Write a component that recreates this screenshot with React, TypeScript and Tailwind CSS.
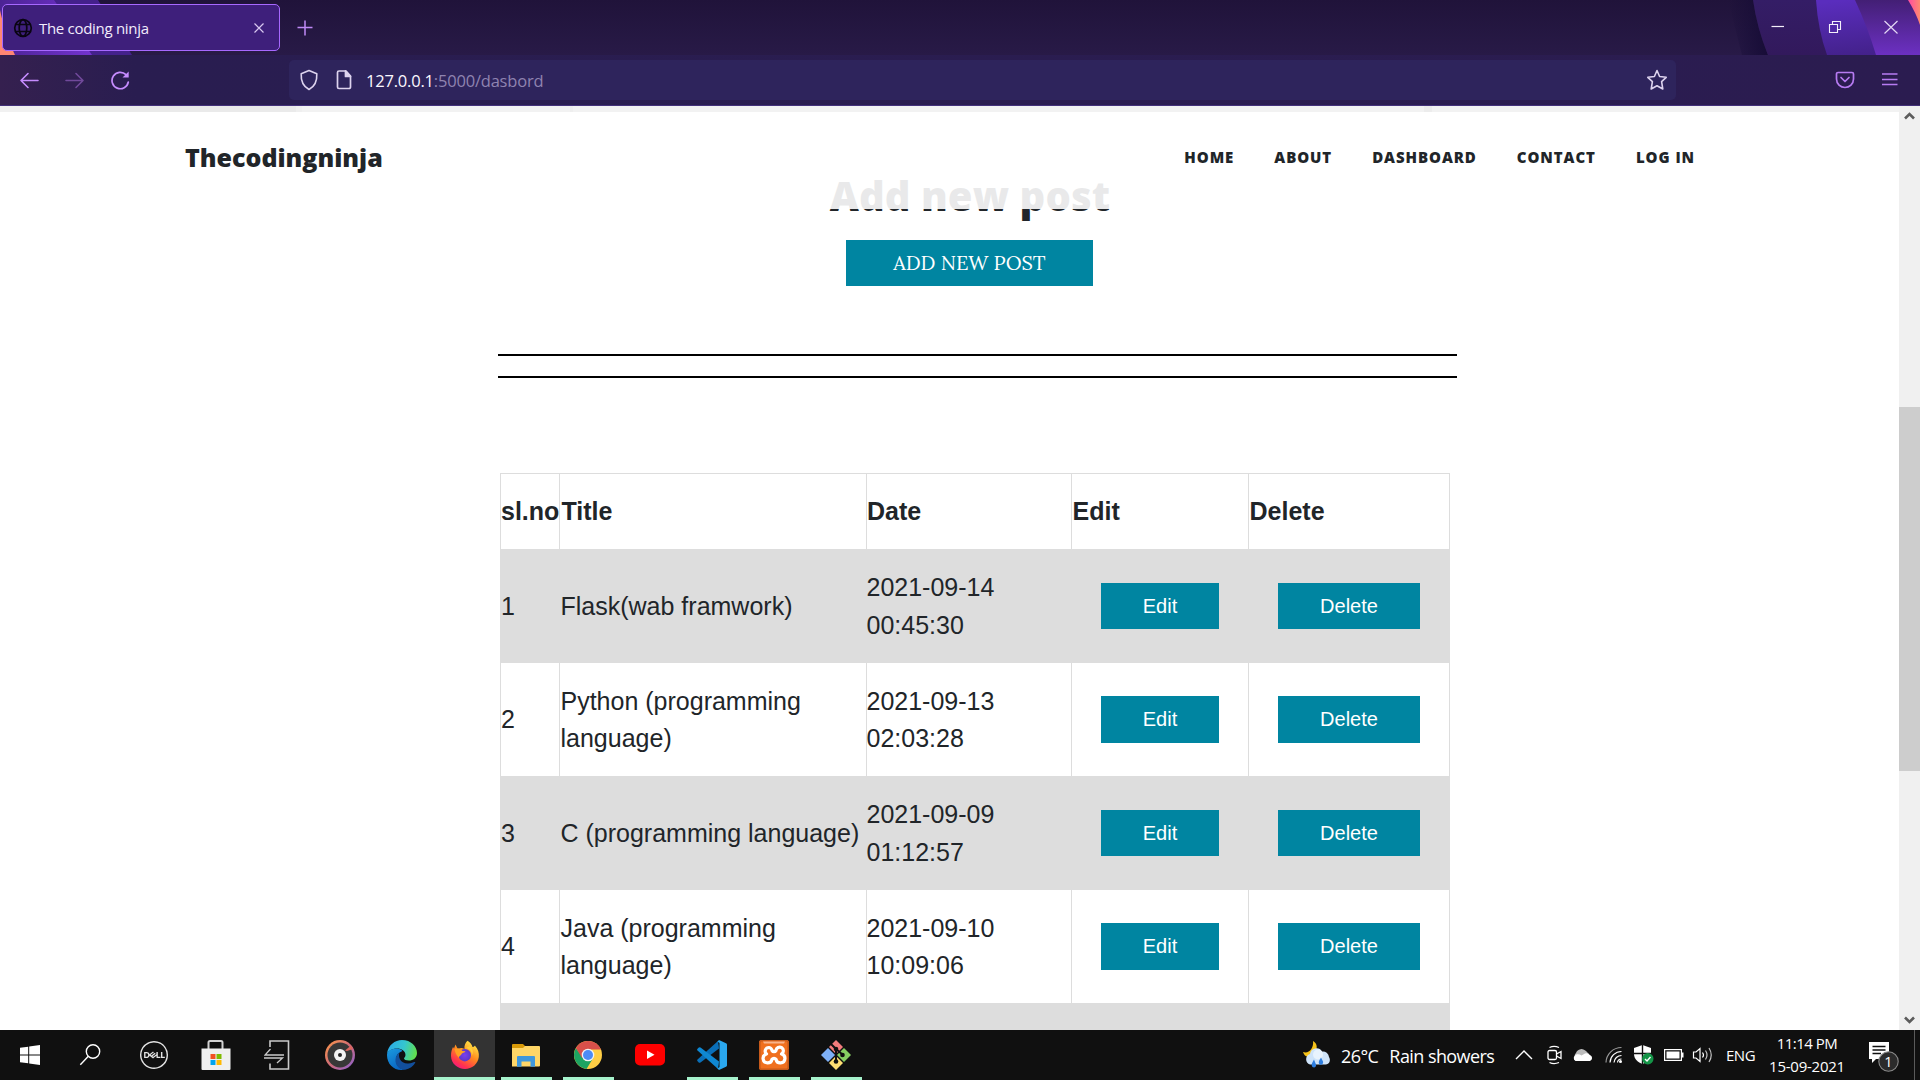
import React from "react";
import { SiDell } from "react-icons/si";

const ui = "font-['Open_Sans','Noto_Sans',sans-serif]";

function TabStrip() {
  return (
    <div className="relative h-[55px] w-full overflow-hidden bg-linear-to-b from-[#20133a] to-[#281a47]">
      <svg className="absolute inset-0" width="1920" height="55" viewBox="0 0 1920 55">
        <defs>
          <linearGradient id="shade" x1="0" x2="1" y1="0" y2="0">
            <stop offset="0" stopColor="#150b35" stopOpacity="0" />
            <stop offset="1" stopColor="#150b35" stopOpacity="0.9" />
          </linearGradient>
          <linearGradient id="g1" x1="0" x2="0" y1="0" y2="1">
            <stop offset="0" stopColor="#341d66" />
            <stop offset="1" stopColor="#32195c" />
          </linearGradient>
          <linearGradient id="g2" x1="0.3" x2="0.5" y1="0" y2="1">
            <stop offset="0" stopColor="#5a2dbd" />
            <stop offset="1" stopColor="#43218a" />
          </linearGradient>
          <linearGradient id="g3" x1="0" x2="0" y1="0" y2="1">
            <stop offset="0" stopColor="#431f75" />
            <stop offset="1" stopColor="#6c30c2" />
          </linearGradient>
          <linearGradient id="g4" x1="0" x2="1" y1="0" y2="0">
            <stop offset="0" stopColor="#ff4aa2" />
            <stop offset="1" stopColor="#ff8a70" />
          </linearGradient>
          <linearGradient id="g5" x1="0" x2="1" y1="0" y2="0">
            <stop offset="0" stopColor="#4b2394" />
            <stop offset="1" stopColor="#7333d0" />
          </linearGradient>
        </defs>
        <path d="M0 0H98L132 55H0Z" fill="#44218c" />
        <path d="M0 0H54L92 55H0Z" fill="url(#g5)" />
        <path d="M0 10Q5 35 15 55H0Z" fill="#ff8673" />
        <path d="M1728 0H1753Q1757 28 1768 55H1742Z" fill="url(#shade)" />
        <path d="M1753 0Q1757 28 1768 55H1920V0Z" fill="url(#g1)" />
        <path d="M1816 0Q1818 30 1827 55H1920V0Z" fill="url(#g2)" />
        <path d="M1855 0Q1868 28 1876 55H1920V0Z" fill="url(#g3)" />
        <path d="M1908 0Q1916 13 1920 25V0Z" fill="url(#g4)" />
      </svg>
      <div className="relative flex h-full items-start pt-1 pl-[2px]">
        <div className="flex h-[47px] w-[278px] items-center rounded-[5px] border border-[#a768ff] bg-[#3e1f7b] pr-[14px] pl-[10px]">
          <svg width="20" height="20" viewBox="0 0 20 20" fill="none" stroke="#0a0513" strokeWidth="1.7">
            <circle cx="10" cy="10" r="8.3" />
            <ellipse cx="10" cy="10" rx="3.8" ry="8.3" />
            <path d="M2.6 6.5H17.4M2.6 13.5H17.4" />
          </svg>
          <span className="ml-[6px] grow pt-[2px] text-[15px] tracking-[-0.3px] text-[#f2ecfc]">The coding ninja</span>
          <svg width="12" height="12" viewBox="0 0 12 12" stroke="#d8c8f0" strokeWidth="1.2">
            <path d="M1.5 1.5 10.5 10.5M10.5 1.5 1.5 10.5" />
          </svg>
        </div>
        <svg className="mt-[15px] ml-[16px]" width="18" height="18" viewBox="0 0 18 18" stroke="#c08af7" strokeWidth="1.5">
          <path d="M9 1.5V16.5M1.5 8.5H16.5" />
        </svg>
        <div className="mt-[14px] mr-[21px] ml-auto flex items-center gap-[41px]">
          <svg width="16" height="18" viewBox="0 0 16 18">
            <path d="M2.500 8.500H15" stroke="#f3effa" strokeWidth="1.2" />
          </svg>
          <svg width="16" height="18" viewBox="0 0 16 18" fill="none" stroke="#f3effa" strokeWidth="1.1">
            <path d="M3.500 6.500H11.500V14.500H3.500ZM6.500 6V3.500H14.500V11.500H12" />
          </svg>
          <svg width="16" height="18" viewBox="0 0 16 18" stroke="#e4d8f5" strokeWidth="1.2">
            <path d="M1.500 3 14.500 15.500M14.500 3 1.500 15.500" />
          </svg>
        </div>
      </div>
    </div>
  );
}

function Toolbar() {
  return (
    <div className="flex h-[51px] w-full items-start border-b border-[#43307a] bg-linear-to-r from-[#35204f] via-[#291d50] via-7% to-[#2b1c50] pt-[5px]">
      <div className="flex h-10 w-[289px] items-center pl-[19px]">
        <svg width="20" height="20" viewBox="0 0 20 20" fill="none" stroke="#c68cff" strokeWidth="1.6" strokeLinecap="round" strokeLinejoin="round">
          <path d="M19 10.500H2M9 3.500 2 10.500 9 17.500" />
        </svg>
        <svg className="ml-[26px]" width="20" height="20" viewBox="0 0 20 20" fill="none" stroke="#71499b" strokeWidth="1.6" strokeLinecap="round" strokeLinejoin="round">
          <path d="M1 10.500H18M11 3.500 18 10.500 11 17.500" />
        </svg>
        <svg className="ml-[25px]" width="20" height="20" viewBox="0 0 20 20" fill="none" stroke="#c68cff" strokeWidth="1.7" strokeLinecap="round">
          <path d="M18.300 12A8.200 8.200 0 1 1 16 4.700" />
          <path d="M18.700 1.500V7.500H12.500Z" fill="#c68cff" stroke="none" />
        </svg>
      </div>
      <div className="flex h-10 w-[1387px] items-center rounded-[5px] bg-[#2e245c] pr-[8px] pl-[10px]">
        <svg width="20" height="22" viewBox="0 0 20 22" fill="none" stroke="#ddd3ee" strokeWidth="1.6" strokeLinejoin="round">
          <path d="M10 1.500 17.800 4.700C18.200 12 15.500 17.500 10 20.500 4.500 17.500 1.800 12 2.200 4.700Z" />
        </svg>
        <svg className="ml-[16px]" width="18" height="22" viewBox="0 0 18 22" fill="none" stroke="#ddd3ee" strokeWidth="1.700" strokeLinejoin="round">
          <path d="M4 2H11L15.500 7V18A1.500 1.500 0 0 1 14 19.500H4A1.500 1.500 0 0 1 2.500 18V3.500A1.500 1.500 0 0 1 4 2Z" />
          <path d="M10.500 2V7.500H15.500Z" fill="#ddd3ee" />
        </svg>
        <span className="ml-[13px] grow pt-[3px] text-[16.500px] tracking-[-0.2px] text-[#8f83b0]">
          <span className="text-[#fbf8ff]">127.0.0.1</span>:5000/dasbord
        </span>
        <svg width="22" height="22" viewBox="0 0 22 22" fill="none" stroke="#ddd3ee" strokeWidth="1.600" strokeLinejoin="round">
          <path d="M11 1.500 13.600 7.500 20.200 8.300 15.600 12.700 16.800 20 11 16.800 5.200 20 6.400 12.700 1.800 8.300 8.400 7.500Z" />
        </svg>
      </div>
      <div className="flex h-10 grow items-center justify-end pr-[21px]">
        <svg width="20" height="18" viewBox="0 0 20 18" fill="none" stroke="#b77bf2" strokeWidth="1.700" strokeLinecap="round" strokeLinejoin="round">
          <path d="M3 1.500H17A1.500 1.500 0 0 1 18.500 3V8C18.500 13 14.500 16.500 10 16.500S1.500 13 1.500 8V3A1.500 1.500 0 0 1 3 1.500Z" />
          <path d="M6 6.500 10 10.500 14 6.500" />
        </svg>
        <svg className="ml-[26px]" width="18" height="16" viewBox="0 0 18 16" stroke="#b77bf2" strokeWidth="1.400">
          <path d="M1 2H16.500M1 7.500H16.500M1 12.500H16.500" />
        </svg>
      </div>
    </div>
  );
}

const rows = [
  { no: "1", title: "Flask(wab framwork)", date: "2021-09-14 00:45:30", box: "h-[114px] bg-[#dddddd]", btn: "h-[46px] pt-[2px]" },
  { no: "2", title: "Python (programming language)", date: "2021-09-13 02:03:28", box: "h-[113px]", btn: "h-[47px]" },
  { no: "3", title: "C (programming language)", date: "2021-09-09 01:12:57", box: "h-[114px] bg-[#dddddd]", btn: "h-[46px] pt-px" },
  { no: "4", title: "Java (programming language)", date: "2021-09-10 10:09:06", box: "h-[113px]", btn: "h-[47px]" },
];

const grid = "grid grid-cols-[59px_307px_205px_177px_202px] border-r border-[#dddddd]";
const cell = "flex items-center border-l border-[#dddddd]";
const bodyCell = `${cell} pt-px`;
const btn = "flex items-center justify-center bg-[#0085a1] text-[20px] text-white";

function PostTable() {
  return (
    <div className="mt-[95px] ml-[2px] w-[950px] border-t border-[#dddddd] font-['Liberation_Sans',Arial,sans-serif] text-[25px] leading-[37.5px] text-[#212529]">
      <div className={`${grid} h-[75px] font-bold`}>
        <div className={cell}>sl.no</div>
        <div className={`${cell} pl-[1.5px]`}>Title</div>
        <div className={cell}>Date</div>
        <div className={`${cell} pl-[0.5px]`}>Edit</div>
        <div className={`${cell} pl-[0.5px]`}>Delete</div>
      </div>
      {rows.map((r) => (
        <div key={r.no} className={`${grid} ${r.box}`}>
          <div className={bodyCell}>{r.no}</div>
          <div className={`${bodyCell} pl-[0.5px]`}>{r.title}</div>
          <div className={bodyCell}>
            <span className="-ml-[0.5px] w-[150px]">{r.date}</span>
          </div>
          <div className={cell}>
            <button className={`${btn} ${r.btn} ml-[29px] w-[118px]`}>Edit</button>
          </div>
          <div className={cell}>
            <button className={`${btn} ${r.btn} ml-[29px] w-[142px]`}>Delete</button>
          </div>
        </div>
      ))}
      <div className="h-[27px] bg-[#dddddd]" />
    </div>
  );
}

function Page() {
  return (
    <main className="relative h-full w-[1899px] overflow-hidden bg-white">
      <div className="flex h-[6px] w-full bg-[#7f7f7f]">
        <div className="w-[60px] bg-[#6f6f6f]" />
        <div className="w-[236px] bg-[#303030]" />
        <div className="w-[6px] bg-[#606060]" />
        <div className="ml-[268px] w-[3px] bg-[#505050]" />
        <div className="ml-[851px] w-[8px] bg-[#404040]" />
      </div>
      <div className="absolute inset-x-0 top-0 z-10 flex h-[103px] items-center bg-white/90 pr-[204px] pl-[185px] font-['Open_Sans',sans-serif] font-extrabold text-[#212529]">
        <div className="text-[25px]">Thecodingninja</div>
        <nav className="ml-auto flex gap-[40px] text-[15px] tracking-[0.94px]">
          <a>HOME</a>
          <a>ABOUT</a>
          <a>DASHBOARD</a>
          <a>CONTACT</a>
          <a>LOG IN</a>
        </nav>
      </div>
      <div className="mt-[59px] ml-[498px] w-[959px]">
        <div className="flex w-[943px] flex-col items-center">
          <h2 className="h-[50px] pl-px font-['Open_Sans',sans-serif] text-[40px] leading-[50px] font-extrabold tracking-[0.08px] whitespace-nowrap text-[#212529]">Add new post</h2>
          <button className="mt-[19px] h-[46px] w-[247px] bg-[#0085a1] font-['Lora','Liberation_Serif',serif] text-[20px] text-white">ADD NEW POST</button>
        </div>
        <div className="mt-[68px] h-[2px] bg-black" />
        <div className="mt-[20px] h-[2px] bg-black" />
        <PostTable />
      </div>
    </main>
  );
}

function Scrollbar() {
  return (
    <div className="flex h-full w-[21px] flex-col items-center bg-[#f0f0f0]">
      <svg width="21" height="20" viewBox="0 0 21 20" fill="none" stroke="#5c5c5c" strokeWidth="2.600">
        <path d="M6 12.500 10.500 8 15 12.500" />
      </svg>
      <div className="mt-[281px] h-[364px] w-full bg-[#cdcdcd]" />
      <svg className="mt-auto" width="21" height="20" viewBox="0 0 21 20" fill="none" stroke="#5c5c5c" strokeWidth="2.600">
        <path d="M6 7.500 10.500 12 15 7.500" />
      </svg>
    </div>
  );
}

function Slot({ children, open, active }: { children: React.ReactNode; open?: boolean; active?: boolean }) {
  return (
    <div className={`flex h-full w-[62px] flex-col items-center ${active ? "bg-[#333333] bg-clip-content pl-px" : ""}`}>
      <div className="flex h-[47px] items-center justify-center pt-[3px]">{children}</div>
      {(open || active) && <div className={`h-[3px] bg-[#a6f2cc] ${active ? "w-[61px]" : "w-[51px]"}`} />}
    </div>
  );
}

function TaskIcons() {
  return (
    <div className="flex h-full">
      <div className="flex w-[60px] items-center justify-center">
        <svg width="20" height="20" viewBox="0 0 20 20" fill="#fff">
          <path d="M0 2.800 8.200 1.700V9.500H0ZM9.200 1.500 20 0V9.500H9.200ZM0 10.500H8.200V18.300L0 17.200ZM9.200 10.500H20V20L9.200 18.500Z" />
        </svg>
      </div>
      <div className="flex w-[63px] items-center justify-center pr-[3px]">
        <svg width="22" height="22" viewBox="0 0 22 22" fill="none" stroke="#fff" strokeWidth="1.400">
          <circle cx="14" cy="7.500" r="6.700" />
          <path d="M9.300 12.300 1.300 20.700" />
        </svg>
      </div>
      <Slot>
        <SiDell size={28} color="#e3e3e3" />
      </Slot>
      <Slot>
        <svg width="30" height="30" viewBox="0 0 30 30">
          <path d="M7.500 10V2.500A1.500 1.500 0 0 1 9 1H20A1.500 1.500 0 0 1 21.500 2.500V10" fill="none" stroke="#d2d2d2" strokeWidth="2" />
          <path d="M.5 8.500H29.500V29A1 1 0 0 1 28.500 30H1.500A1 1 0 0 1 .5 29Z" fill="#efefef" />
          <path d="M9.500 14H14.500V19H9.500Z" fill="#f25022" />
          <path d="M15.500 14H20.500V19H15.500Z" fill="#7fba00" />
          <path d="M9.500 20H14.500V25H9.500Z" fill="#00a4ef" />
          <path d="M15.500 20H20.500V25H15.500Z" fill="#ffb900" />
        </svg>
      </Slot>
      <Slot>
        <svg className="mr-[3px]" width="26" height="30" viewBox="0 0 26 30" fill="none" stroke="#c9c9c9" strokeWidth="1.300">
          <path d="M6 7V1H24.500V29H6V23.500" strokeWidth="1.600" />
          <path d="M6.500 9 1 15H20M0 18H18.500L13 23" />
        </svg>
      </Slot>
      <Slot>
        <svg width="30" height="30" viewBox="0 0 30 30">
          <defs>
            <linearGradient id="groove" x1="0" x2="1" y1="0" y2="1">
              <stop offset="0" stopColor="#ff9a45" />
              <stop offset="0.500" stopColor="#cf6b78" />
              <stop offset="1" stopColor="#8560d8" />
            </linearGradient>
          </defs>
          <circle cx="15" cy="15" r="15" fill="url(#groove)" />
          <circle cx="15" cy="15" r="12.500" fill="#383838" />
          <path d="M20 10.500 26 5.500 28 9 22 11Z" fill="#d9665f" />
          <circle cx="15" cy="15" r="6" fill="#f4f4f4" />
          <circle cx="15" cy="15" r="2" fill="#262626" />
        </svg>
      </Slot>
      <Slot>
        <svg width="30" height="30" viewBox="0 0 30 30">
          <defs>
            <linearGradient id="edgeTop" x1="0" x2="1" y1="0.300" y2="0.500">
              <stop offset="0" stopColor="#2aa9e8" />
              <stop offset="0.550" stopColor="#35c6cf" />
              <stop offset="1" stopColor="#62e04c" />
            </linearGradient>
            <linearGradient id="edgeLow" x1="0" x2="0.500" y1="0" y2="1">
              <stop offset="0" stopColor="#1a9be0" />
              <stop offset="1" stopColor="#0a66c2" />
            </linearGradient>
          </defs>
          <path d="M0 14C1 5 8 0 15 0 24 0 30 6.500 30 13 30 18 26 20.500 22 20.500 19 20.500 17 19.500 17 18.500 17 17.500 18.500 17 18.500 15 18.500 11 14.500 8.500 10 8.500 5 8.500 1 11 0 14Z" fill="url(#edgeTop)" />
          <path d="M0 15C0 11 4.500 8.500 10 8.500 12 8.500 14.500 9.500 15.500 11 11 12.500 9 16 9 19.500 9 25 13 29.500 17.500 29.700 8 31.500 0 25 0 15Z" fill="url(#edgeLow)" />
          <path d="M12.500 12.500C11 16 12.500 23.500 21 23.500 24.500 23.500 26.500 22.300 27.500 22 28.300 21.800 28.500 22.500 28 23 25 28 20 30 16 29.700 11 28.500 8 24 8.500 19.500 8.700 16.500 10.200 14 12.500 12.500Z" fill="#124f9c" />
        </svg>
      </Slot>
      <Slot active>
        <svg width="30" height="30" viewBox="0 0 30 30">
          <defs>
            <linearGradient id="fox" x1="0.800" x2="0.200" y1="0" y2="1">
              <stop offset="0" stopColor="#fff14a" />
              <stop offset="0.450" stopColor="#ff8a1e" />
              <stop offset="0.800" stopColor="#ff3150" />
              <stop offset="1" stopColor="#f0148c" />
            </linearGradient>
            <radialGradient id="foxCore">
              <stop offset="0" stopColor="#7a3ff0" />
              <stop offset="1" stopColor="#5c36c8" />
            </radialGradient>
          </defs>
          <path d="M17.500 .8C20 2 22 5 22.500 7 24.500 7.300 24 5.500 25 5.800 28 9 29.300 13 28.800 17 28 24 22 29 15 29 7.500 29 1.200 23.500 1 16 .9 12 2 9 3 7L4 8.500 5.500 4.500 7.500 8.500 10 8.300C13 7.500 13.800 9 14.500 9 14 5.500 15.500 2.500 17.500 .8Z" fill="url(#fox)" />
          <circle cx="14.800" cy="15.200" r="6.200" fill="url(#foxCore)" />
          <path d="M4.500 9C8 7.800 11 9 12.500 11L15.500 11.300C15 13 12 13 11.500 14 11 16 9 15.500 9 18 6 15 5 12 4.500 9Z" fill="#ffa022" />
          <path d="M16 8C20.500 9 22.500 12.500 21.500 16 24 13 23 8 19.500 6Z" fill="#ffce3a" />
        </svg>
      </Slot>
      <Slot open>
        <svg width="28" height="30" viewBox="0 0 28 30">
          <path d="M0 5A1 1 0 0 1 1 4H11L13.500 6.500V9H0Z" fill="#d99a08" />
          <path d="M0 8H11L13 6H27A1 1 0 0 1 28 7V25.500A1 1 0 0 1 27 26.500H0Z" fill="#ffd667" />
          <path d="M5 26.700V17A1 1 0 0 1 6 16H22A1 1 0 0 1 23 17V26.700H18.500V21.500H9.500V26.700Z" fill="#3f97dc" />
        </svg>
      </Slot>
      <Slot open>
        <svg width="28" height="30" viewBox="0 0 28 30">
          <circle cx="14" cy="15" r="14" fill="#ffce45" />
          <path d="M1.900 8A14 14 0 0 0 12.500 28.900L19.200 18 8 16Z" fill="#1da462" />
          <path d="M1.900 8A14 14 0 0 1 27 9.500H14L8 18Z" fill="#d9504a" />
          <circle cx="14" cy="15" r="6.300" fill="#f3f3f3" />
          <circle cx="14" cy="15" r="5" fill="#4c8bf5" />
        </svg>
      </Slot>
      <Slot>
        <svg width="30" height="22" viewBox="0 0 30 22">
          <rect width="30" height="21.500" rx="5" fill="#fe0000" />
          <path d="M12 6.500 19.500 10.700 12 15Z" fill="#fff" />
        </svg>
      </Slot>
      <Slot open>
        <svg width="30" height="30" viewBox="0 0 30 30">
          <path d="M.5 19.500 21 1 22 8.500 3.500 22.500A1.500 1.500 0 0 1 1.500 22.300L.4 21A1.200 1.200 0 0 1 .5 19.500Z" fill="#0a6fb8" />
          <path d="M.5 10.500 21 29 22 21.500 3.500 7.500A1.500 1.500 0 0 0 1.500 7.700L.4 9A1.200 1.200 0 0 0 .5 10.500Z" fill="#0f88d3" />
          <path d="M22 0 29 3.200A1.800 1.800 0 0 1 30 5V25A1.800 1.800 0 0 1 29 26.800L22 30 20.500 28.500 22.500 27V3L20.500 1.500Z" fill="#2aa7ee" />
        </svg>
      </Slot>
      <Slot open>
        <svg width="30" height="30" viewBox="0 0 30 30">
          <rect width="30" height="30" rx="2.500" fill="#f0701f" />
          <rect x=".8" y=".8" width="28.400" height="28.400" rx="2" fill="none" stroke="#c65a1b" strokeWidth="1.600" />
          <path d="M4 1.500H26L25 3.500H5Z" fill="#f9b48a" />
          <path d="M10 7.500A3.700 3.700 0 0 0 7.500 14 4.500 4.500 0 1 0 13 19.300C14 18 16 18 17 19.300A4.500 4.500 0 1 0 22.500 14 3.700 3.700 0 1 0 17 10.500C16 12 14 12 13 10.500A3.700 3.700 0 0 0 10 7.500Z" fill="none" stroke="#fff" strokeWidth="3.200" strokeLinejoin="round" />
        </svg>
      </Slot>
      <Slot open>
        <svg width="30" height="30" viewBox="0 0 30 30">
          <path d="M15 0 22 7 15 14 8 7Z" fill="#f47c7c" />
          <path d="M7 8 14 15 7 22 0 15Z" fill="#7eb0f7" />
          <path d="M23 8 30 15 23 22 16 15Z" fill="#86cf62" />
          <path d="M15 16 22 23 15 30 8 23Z" fill="#ffdf73" />
          <path d="M10 4 15 9V22M15 9 22 15" fill="none" stroke="#111" strokeWidth="2" />
          <circle cx="15" cy="9" r="2.300" fill="#111" />
          <circle cx="21.500" cy="15" r="2.300" fill="#111" />
          <circle cx="15" cy="21.500" r="2.300" fill="#111" />
        </svg>
      </Slot>
    </div>
  );
}

function Tray() {
  return (
    <div className="ml-auto flex h-full items-center text-white">
      <svg width="30" height="30" viewBox="0 0 30 30" className="mr-[9px]">
        <path d="M11 1C15 3 16 8 13 12L8 17C4 17 2 15 1 12 7 14 12 8 11 1Z" fill="#f5c21a" />
        <path d="M8 24.500A5.500 5.500 0 0 1 8 14A6.500 6.500 0 0 1 20 11.500 6 6 0 0 1 27 17C29 20 27.500 24.500 23.500 24.500Z" fill="#cfe4fa" />
        <circle cx="16" cy="14.500" r="5" fill="#e8f3fe" />
        <path d="M12 19.500C9.500 24 9 25 10.500 27 13 28.500 14.500 26 14 24.500ZM19 17.500C16.500 21.500 16 23 18 24.500 20.500 25.500 21.500 23 21 21.500Z" fill="#2f7fe0" />
      </svg>
      <div className="flex w-[174px] gap-[11px] pt-[2px] text-[18px] tracking-[-0.57px] whitespace-nowrap">
        <span>26°C</span>
        <span>Rain showers</span>
      </div>
      <svg width="18" height="12" viewBox="0 0 18 12" fill="none" stroke="#fff" strokeWidth="1.400">
        <path d="M1 10 9 2 17 10" />
      </svg>
      <svg className="ml-[14px]" width="16" height="20" viewBox="0 0 16 20" fill="none" stroke="#fff" strokeWidth="1.300">
        <rect x="1" y="5.500" width="8.500" height="9" rx="1.500" />
        <path d="M9.500 9 14 6.500V13.500L9.500 11M2.500 2.500Q7 .3 12 2.500M2.500 17.500Q7 19.700 12 17.500" />
      </svg>
      <svg className="ml-[9px]" width="22" height="14" viewBox="0 0 22 14">
        <path d="M4 11A4 4 0 0 1 4 5 6 6 0 0 1 14 3L17 6 8 12Z" fill="#bcbcbc" />
        <path d="M3.500 13A3.500 3.500 0 0 1 4 6.700C6 6 8 6.500 9.500 7.500L13 5.500A5 5 0 0 1 18 7 3.200 3.200 0 0 1 18 13Z" fill="#fff" />
      </svg>
      <svg className="ml-[11px]" width="18" height="18" viewBox="0 0 18 18" fill="none" stroke="#fff" strokeWidth="1.200">
        <path d="M1 16.500A15.500 15.500 0 0 1 16.500 1.500" stroke="#999" />
        <path d="M5 16.500A11.500 11.500 0 0 1 16.500 5.500M9 16.500A7.500 7.500 0 0 1 16.500 9.500M12.500 16.500A4 4 0 0 1 16.500 13" />
        <circle cx="15.500" cy="15.500" r="1.500" fill="#fff" stroke="none" />
      </svg>
      <svg className="ml-[10px]" width="21" height="20" viewBox="0 0 21 20">
        <path d="M9.500 0 18 3V9C18 14 14 17.500 9.500 19 5 17.500 1 14 1 9V3Z" fill="#fff" />
        <path d="M9.500 0V19M1 8.500H18" stroke="#101010" strokeWidth="1.400" />
        <circle cx="14.800" cy="13.800" r="5.700" fill="#149447" />
        <path d="M12 14 14 16 17.500 12" fill="none" stroke="#fff" strokeWidth="1.400" />
      </svg>
      <svg className="ml-[10px]" width="20" height="12" viewBox="0 0 20 12">
        <rect x=".6" y=".6" width="16.800" height="10.800" fill="none" stroke="#fff" strokeWidth="1.200" />
        <path d="M2.500 2.500H15.500V9.500H2.500ZM18 3.500H19.500V8.500H18Z" fill="#fff" />
      </svg>
      <svg className="ml-[8px]" width="22" height="18" viewBox="0 0 22 18" fill="none" stroke="#fff" strokeWidth="1.200">
        <path d="M1.500 6H4L8 2.500V15.500L4 12H1.500ZM10.500 6.500Q12.500 9 10.500 11.500" />
        <path d="M13.500 4.500Q16.500 9 13.500 13.500M17 2Q21.500 9 17 16" stroke="#c4c4c4" />
      </svg>
      <span className="ml-[12px] w-[42px] text-[15px] tracking-[-0.5px]">ENG</span>
      <div className="flex w-[78px] flex-col items-center text-[15px] leading-[23px] whitespace-nowrap">
        <span className="tracking-[-0.5px]">11:14 PM</span>
        <span className="tracking-[-0.25px]">15-09-2021</span>
      </div>
      <svg className="ml-[22px]" width="32" height="34" viewBox="0 0 32 34">
        <path d="M1 4H21V21H8L4 25V21H1Z" fill="#fff" />
        <path d="M4.500 8.500H17.500M4.500 12H17.500M4.500 15.500H13" stroke="#101010" strokeWidth="1.400" />
        <circle cx="20.500" cy="23.500" r="9.700" fill="#2b2b2b" stroke="#8a8a8a" strokeWidth="1.100" />
        <text x="20.500" y="28.800" textAnchor="middle" fontSize="14.500" fill="#fff">1</text>
      </svg>
      <div className="ml-[14px] h-full w-[6px] border-l border-[#5a5a5a]" />
    </div>
  );
}

export default function App() {
  return (
    <div className={`flex h-[1080px] w-[1920px] flex-col overflow-hidden bg-white ${ui}`}>
      <TabStrip />
      <Toolbar />
      <div className="flex h-[924px]">
        <Page />
        <Scrollbar />
      </div>
      <footer className="flex h-[50px] bg-[#101010]">
        <TaskIcons />
        <Tray />
      </footer>
    </div>
  );
}
